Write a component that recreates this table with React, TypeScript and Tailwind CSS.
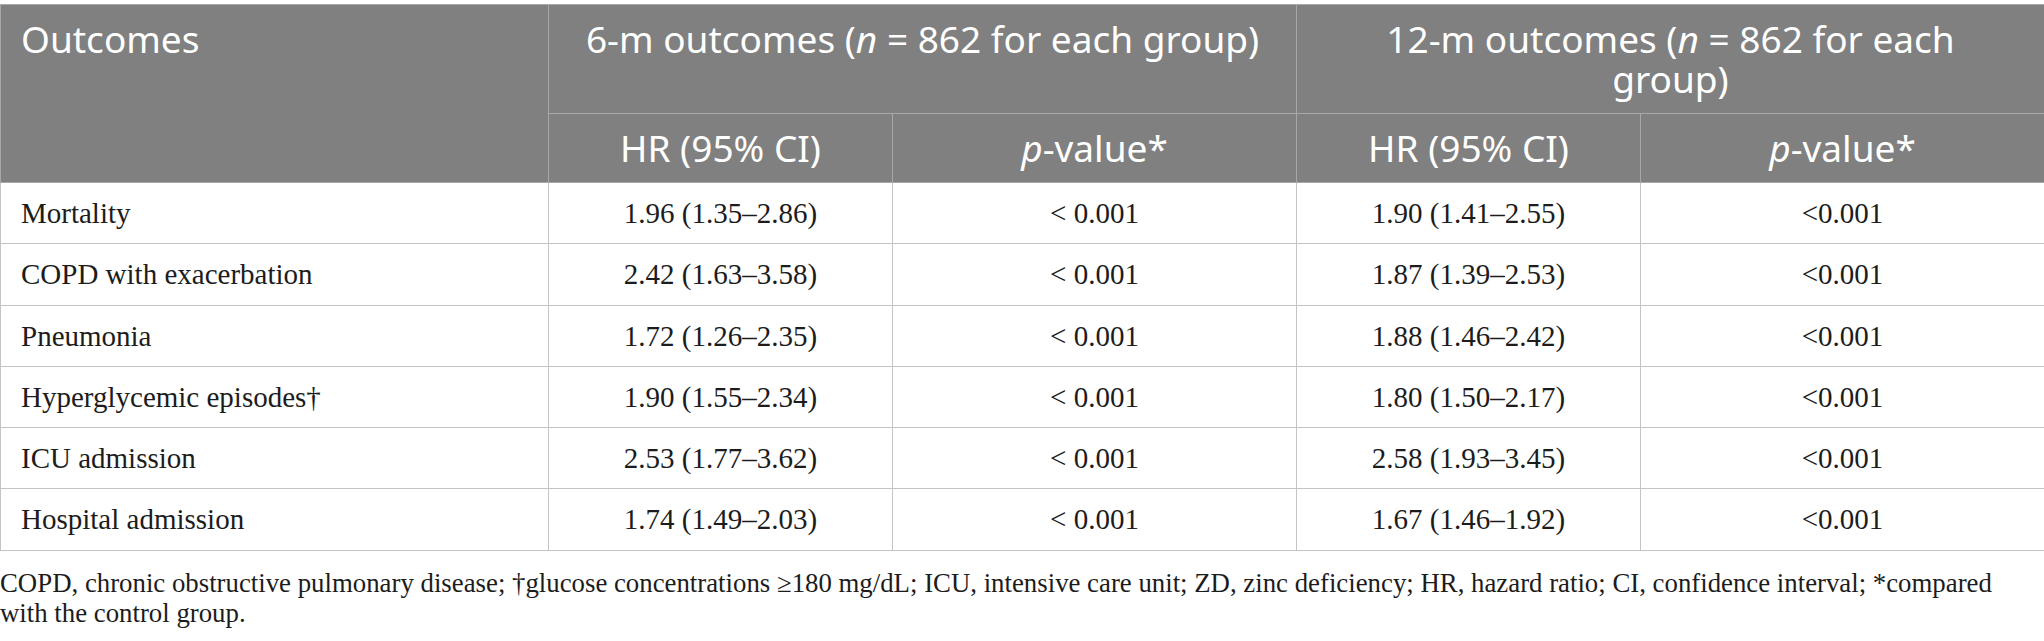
import React from 'react';

const rows: string[][] = [
  ['Mortality', '1.96 (1.35–2.86)', '< 0.001', '1.90 (1.41–2.55)', '<0.001'],
  ['COPD with exacerbation', '2.42 (1.63–3.58)', '< 0.001', '1.87 (1.39–2.53)', '<0.001'],
  ['Pneumonia', '1.72 (1.26–2.35)', '< 0.001', '1.88 (1.46–2.42)', '<0.001'],
  ['Hyperglycemic episodes†', '1.90 (1.55–2.34)', '< 0.001', '1.80 (1.50–2.17)', '<0.001'],
  ['ICU admission', '2.53 (1.77–3.62)', '< 0.001', '2.58 (1.93–3.45)', '<0.001'],
  ['Hospital admission', '1.74 (1.49–2.03)', '< 0.001', '1.67 (1.46–1.92)', '<0.001'],
];

const th =
  "border border-[#a8a8a8] px-[20px] py-[14px] align-top font-normal text-white text-[37px] leading-[40px] font-['Noto_Sans',sans-serif]";
const td =
  "border border-[#c4c4c4] px-[20px] py-[15px] align-middle text-[29px] leading-[30.3px] text-[#1c1c1c] font-['Liberation_Serif',serif]";

export default function App() {
  return (
    <div className="w-[2044px] bg-white pt-1">
      <table className="w-full table-fixed border-collapse border border-[#c4c4c4]">
        <colgroup>
          <col className="w-[548px]" />
          <col className="w-[344px]" />
          <col className="w-[404px]" />
          <col className="w-[344px]" />
          <col className="w-[404px]" />
        </colgroup>
        <thead className="bg-[#7f807f]">
          <tr>
            <th rowSpan={2} className={`${th} text-left`}>
              Outcomes
            </th>
            <th colSpan={2} className={`${th} text-center whitespace-nowrap`}>
              6-m outcomes (<i>n</i> = 862 for each group)
            </th>
            <th colSpan={2} className={`${th} text-center`}>
              12-m outcomes (<i>n</i> = 862 for each
              <br />
              group)
            </th>
          </tr>
          <tr>
            <th className={`${th} text-center`}>HR (95% CI)</th>
            <th className={`${th} text-center`}>
              <i>p</i>-value*
            </th>
            <th className={`${th} text-center`}>HR (95% CI)</th>
            <th className={`${th} text-center`}>
              <i>p</i>-value*
            </th>
          </tr>
        </thead>
        <tbody>
          {rows.map((row) => (
            <tr key={row[0]}>
              {row.map((cell, i) => (
                <td key={i} className={`${td} ${i === 0 ? 'text-left' : 'text-center'}`}>
                  {cell}
                </td>
              ))}
            </tr>
          ))}
        </tbody>
      </table>

      {/* Footnote */}
      <p className="mt-[17px] text-[26.8px] leading-[30px] text-[#1c1c1c] font-['Liberation_Serif',serif]">
        COPD, chronic obstructive pulmonary disease; †glucose concentrations ≥180 mg/dL; ICU, intensive care unit; ZD,
        zinc deficiency; HR, hazard ratio; CI, confidence interval; *compared
        <br />
        with the control group.
      </p>
    </div>
  );
}
